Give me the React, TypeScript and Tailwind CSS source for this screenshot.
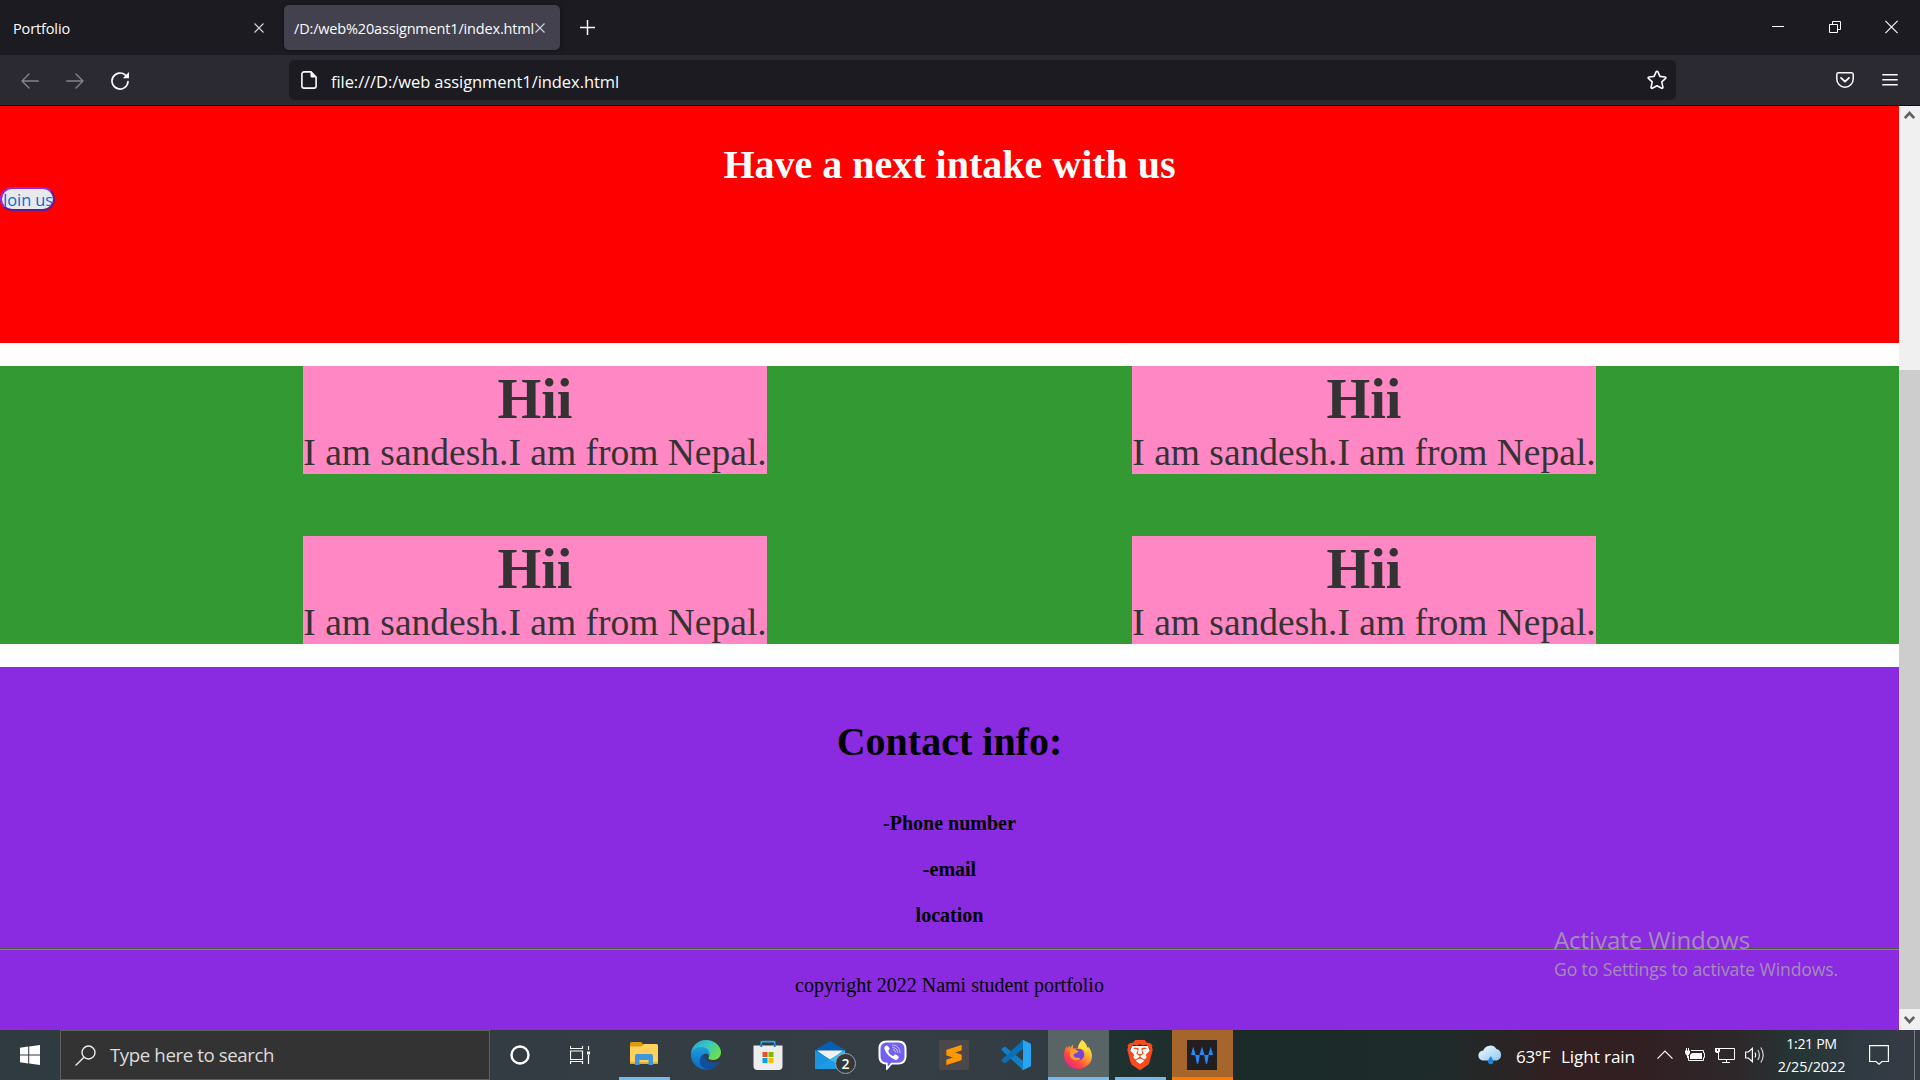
import React from "react";
import { SiBrave, SiSublimetext } from "react-icons/si";

const sans = "font-['Open_Sans','Noto_Sans',sans-serif]";

function TabStrip() {
  return (
    <div className="flex h-[55px] items-start bg-[#1c1b22] text-[#fbfbfe]">
      <div className="flex h-[55px] w-[284px] items-center justify-between pl-[13px] pr-[20px]">
        <span className="mt-[2px] text-[14.5px] leading-5 tracking-[-0.13px]">Portfolio</span>
        <svg width="10" height="10" viewBox="0 0 10 10" stroke="#cfcfd8" strokeWidth="1.2">
          <path d="M.5 .5l9 9M9.5 .5l-9 9" />
        </svg>
      </div>
      <div className="mt-[5px] flex h-[45px] w-[276px] items-center rounded-[5px] bg-[#42414d] pl-[10px] shadow-[0_0_4px_rgba(0,0,0,0.5)]">
        <span className="mt-[2px] w-[241px] whitespace-nowrap text-[14.5px] leading-5 tracking-[-0.17px]">
          /D:/web%20assignment1/index.html
        </span>
        <svg width="10" height="10" viewBox="0 0 10 10" stroke="#cfcfd8" strokeWidth="1.2">
          <path d="M.5 .5l9 9M9.5 .5l-9 9" />
        </svg>
      </div>
      <svg width="15" height="15" viewBox="0 0 15 15" stroke="#fbfbfe" strokeWidth="1.5" className="ml-[20px] mt-[20px]">
        <path d="M7.5 0v15M0 7.500h15" />
      </svg>
      <div className="ml-auto mr-[22px] mt-[20px] flex h-[14px] items-center">
        <svg width="12" height="14" viewBox="0 0 12 14" className="mr-[45px]">
          <path d="M0 6h12v1H0z" fill="#fff" />
        </svg>
        <svg width="12" height="14" viewBox="0 0 12 14" fill="none" stroke="#fff" className="mr-[44px]">
          <path d="M.5 4.5h8v8h-8zM3.500 4V1.500h8v8H9" />
        </svg>
        <svg width="13" height="14" viewBox="0 0 13 14" stroke="#fff" strokeWidth="1.1">
          <path d="M.4 .9l12.200 12.200M12.600 .9L.4 13.100" />
        </svg>
      </div>
    </div>
  );
}

function Toolbar() {
  return (
    <div className="flex h-[51px] items-start border-b border-[#0c0c0d] bg-[#2b2a33] text-[#fbfbfe]">
      <div className="flex h-[50px] w-[289px] items-center pl-[21px]">
        <svg width="18" height="16" viewBox="0 0 18 16" fill="none" stroke="#85848c" strokeWidth="1.4" strokeLinecap="round" strokeLinejoin="round" className="mt-[1px]">
          <path d="M17.300 8H1M8 1L1 8l7 7" />
        </svg>
        <svg width="18" height="16" viewBox="0 0 18 16" fill="none" stroke="#85848c" strokeWidth="1.400" strokeLinecap="round" strokeLinejoin="round" className="ml-[27px] mt-[1px]">
          <path d="M.7 8H17M10 1l7 7-7 7" />
        </svg>
        <svg width="20" height="20" viewBox="0 0 20 20" fill="none" className="ml-[26px] mt-[1px]">
          <path d="M15.500 4.200A8 8 0 1 0 18 10.500" stroke="#fbfbfe" strokeWidth="1.700" strokeLinecap="round" />
          <path d="M19 1v6.200h-6.200z" fill="#fbfbfe" />
        </svg>
      </div>
      <div className="mt-[5px] flex h-10 w-[1387px] items-center rounded-[5px] bg-[#1c1b22] pl-3">
        <svg width="16" height="18" viewBox="0 0 16 18" fill="none" className="mb-[1px]">
          <path d="M3 .9h7l5.100 5.100v9a2.100 2.100 0 0 1-2.100 2.100H3A2.100 2.100 0 0 1 .9 15V3A2.100 2.100 0 0 1 3 .9z" stroke="#fbfbfe" strokeWidth="1.600" />
          <path d="M9.500 .9l5.600 5.600h-4a1.600 1.600 0 0 1-1.600-1.600z" fill="#fbfbfe" />
        </svg>
        <span className="ml-[14px] mt-[3px] text-[16.5px] leading-5 tracking-[-0.07px]">file:///D:/web assignment1/index.html</span>
        <svg width="20" height="20" viewBox="0 0 20 20" fill="none" stroke="#fbfbfe" strokeWidth="1.600" strokeLinejoin="round" className="ml-auto mr-[9px]">
          <path d="M9.200 1.700a.9.9 0 0 1 1.600 0l2.100 4.700 5.200.6a.8.8 0 0 1 .5 1.400l-3.800 3.500 1.100 5.400a.8.8 0 0 1-1.200.9L10 15.700l-4.700 2.500a.8.800 0 0 1-1.200-.9l1.100-5.400L1.400 8.400A.8.8 0 0 1 1.900 7l5.200-.6z" />
        </svg>
      </div>
      <div className="ml-auto mr-[22px] flex h-[50px] items-center">
        <svg width="18" height="16" viewBox="0 0 18 16" fill="none" stroke="#fbfbfe" strokeWidth="1.500" strokeLinecap="round" strokeLinejoin="round">
          <path d="M2.500 .8h13a1.700 1.700 0 0 1 1.700 1.700V7a8.200 8.200 0 0 1-16.400 0V2.500A1.700 1.700 0 0 1 2.500 .8z" />
          <path d="M5 5.800l4 3.800 4-3.800" strokeWidth="1.800" />
        </svg>
        <svg width="16" height="14" viewBox="0 0 16 14" stroke="#fbfbfe" strokeWidth="1.400" className="ml-[28px]">
          <path d="M.3 1.700h15.400M.3 6.700h15.400M.3 11.700h15.400" />
        </svg>
      </div>
    </div>
  );
}

function Card() {
  return (
    <div className="h-[108px] w-[464px] bg-[#ff87c3] text-center text-[#333333]">
      <h2 className="h-[65px] text-[56.25px] font-bold leading-[67px]">Hii</h2>
      <p className="whitespace-nowrap text-[37.5px] leading-[43px]">I am sandesh.I am from Nepal.</p>
    </div>
  );
}

function Page() {
  return (
    <div className="w-[1899px] bg-white font-['Liberation_Serif',serif] text-black">
      <section className="h-[237px] bg-[#ff0000] pt-[35px]">
        <h1 className="h-[46px] text-center text-[40px] font-bold leading-[47px] text-white">Have a next intake with us</h1>
        <button className={`${sans} flex h-6 w-[55px] items-center justify-center overflow-hidden rounded-[12px] border-2 border-b-[#5c1d98] border-l-[#8a2be2] border-r-[#5c1d98] border-t-[#8a2be2] bg-[#e9e9ed] text-[16.4px] leading-5 tracking-[-0.08px] text-[#0b6ad0]`}>
          <span className="ml-[1px] mt-[1px] whitespace-nowrap">Join us</span>
        </button>
      </section>
      <section className="mt-[23px] grid h-[278px] grid-cols-[464px_464px] content-between justify-start gap-x-[365px] bg-[#339933] pl-[303px]">
        <Card />
        <Card />
        <Card />
        <Card />
      </section>
      <footer className="mt-[23px] h-[363px] bg-[#8a2be2] pt-[51px] text-center text-[20px] leading-[23px]">
        <h1 className="h-[46px] text-[40px] font-bold leading-[47px]">Contact info:</h1>
        <p className="mt-[48px] font-bold">-Phone number</p>
        <p className="mt-[23px] font-bold">-email</p>
        <p className="mt-[23px] font-bold">location</p>
        <div className="mt-[21px] h-[2px] border-t border-[#525a3c] bg-[#808a78]" />
        <p className="mt-[24px]">copyright 2022 Nami student portfolio</p>
      </footer>
    </div>
  );
}

function Scrollbar() {
  return (
    <div className="flex w-[21px] flex-col bg-[#f0f0f0]">
      <div className="flex h-[21px] justify-center pt-[4px]">
        <svg width="11" height="10" viewBox="0 0 11 10" fill="none" stroke="#606060" strokeWidth="2.600">
          <path d="M.8 8L5.500 3l4.700 5" />
        </svg>
      </div>
      <div className="mt-[243px] flex-1 bg-[#cdcdcd]" />
      <div className="flex h-[21px] justify-center pt-[6px]">
        <svg width="11" height="10" viewBox="0 0 11 10" fill="none" stroke="#606060" strokeWidth="2.600">
          <path d="M.8 2l4.700 5 4.700-5" />
        </svg>
      </div>
    </div>
  );
}

function ExplorerIcon() {
  return (
    <svg width="28" height="24" viewBox="0 0 28 24" className="-mt-[2px]">
      <path d="M0 1.500Q0 0 1.500 0H11l2.500 2.500V8H0z" fill="#dd9a0c" />
      <path d="M0 4.500h11.500L14 2h12.500Q28 2 28 3.500v17Q28 22 26.500 22h-25Q0 22 0 20.500z" fill="#ffd15c" />
      <path d="M0 20h28v.5q0 1.500-1.500 1.500h-25Q0 22 0 20.500z" fill="#e7ac32" />
      <path d="M5 23V14q0-2 2-2h14q2 0 2 2v9h-4.500v-5h-9v5z" fill="#3f97d9" />
    </svg>
  );
}

function EdgeIcon() {
  return (
    <svg width="30" height="30" viewBox="0 0 30 30">
      <defs>
        <linearGradient id="edgeTop" x1="0" y1="0" x2="1" y2=".6">
          <stop offset="0" stopColor="#2a9fd6" />
          <stop offset=".5" stopColor="#36c7c4" />
          <stop offset="1" stopColor="#6be04a" />
        </linearGradient>
        <linearGradient id="edgeLeft" x1="0" y1="0" x2="0" y2="1">
          <stop offset="0" stopColor="#1b9de2" />
          <stop offset="1" stopColor="#0c67b8" />
        </linearGradient>
      </defs>
      <path d="M0 14C.5 6 7 0 15 0c8.500 0 15 6 15 12.500 0 4.500-3.500 7.500-8 7.500-3.500 0-5-1.300-4.500-2.300C20 14 17 8.500 11 8.500 5 8.500 1 11 0 14z" fill="url(#edgeTop)" />
      <path d="M0 15c0-5 5-8 10.500-8 5.500 0 9.500 4 7.500 9.500-.7-2.800-3-3.800-5-2.500C8 17 9 26 19 29.500 8.500 31.500 0 24 0 15z" fill="url(#edgeLeft)" />
      <path d="M12.700 14.300C8.500 16 7 23 11.500 27c4.500 4 12 3.300 16.200-4.500.3-.7-.3-1-1-.6-5 2.600-12.500.4-14-7.600z" fill="#0f4f9e" />
    </svg>
  );
}

function StoreIcon() {
  return (
    <svg width="30" height="30" viewBox="0 0 30 30">
      <path d="M8.300 6V2.200Q8.300 1.600 9 1.600h12q.7 0 .7.6V6" fill="none" stroke="#25a9e8" strokeWidth="1.700" />
      <path d="M.5 5.500h29V26q0 4-4 4h-21q-4 0-4-4z" fill="#ededed" />
      <path d="M8.300 4v3M21.700 4v3" stroke="#1178c0" strokeWidth="1.700" />
      <path d="M9.500 12h5v5h-5z" fill="#f25022" />
      <path d="M15.500 12h5v5h-5z" fill="#7fba00" />
      <path d="M9.500 18h5v5h-5z" fill="#00a4ef" />
      <path d="M15.500 18h5v5h-5z" fill="#ffb900" />
    </svg>
  );
}

function MailIcon() {
  return (
    <div className="relative h-[28px] w-[30px]">
      <svg width="30" height="28" viewBox="0 0 30 28">
        <path d="M0 9L15 0l15 9v5H0z" fill="#0560b4" />
        <path d="M2 9.500h26L15.500 20z" fill="#f1f1f1" />
        <path d="M0 9l17 10.500L30 28H0z" fill="#1b93e0" />
        <path d="M30 9v19L14.500 18.500z" fill="#35bdf2" />
        <path d="M0 28l14.500-9.500L30 28z" fill="#1f9ae4" />
      </svg>
      <span className="absolute left-[20px] top-[12px] flex h-[21px] w-[21px] items-center justify-center rounded-full border border-[#a0a4a6] bg-[#33383b] text-[14px] font-semibold leading-none text-white">
        2
      </span>
    </div>
  );
}

function ViberIcon() {
  return (
    <svg width="29" height="30" viewBox="0 0 29 30">
      <path d="M9 .5h11c6 0 8.500 3 8.500 8.500v7c0 5.500-2.500 8.500-8.500 8.500h-6L9 30H8v-5.500C3 24 .5 21.500.5 16V9C.5 3.500 3 .5 9 .5z" fill="#fff" />
      <path d="M9.500 2.500h10c4.700 0 7 2 7 7v6.300c0 5-2.300 7-7 7h-6.300l-3.500 4v-4C5 22.600 2.500 20.500 2.500 15.800V9.500c0-5 2.300-7 7-7z" fill="#7360f2" />
      <path d="M8.500 5.500c1-.5 3.500 2.800 3 3.700-.4.800-1.500 1-1.200 2 .7 2.300 2.400 4 4.600 4.700 1 .3 1.300-1 2.300-1.300 1-.2 4 2 3.500 3.200-.7 1.500-2.200 2.600-3.600 2C12 17.500 8 13.500 6.400 8.800c-.4-1.400.7-2.700 2.100-3.300z" fill="#fff" />
      <path d="M14.500 5c4.500.2 7.500 3 7.500 7.500M14.800 7.500c3 .2 4.700 1.800 4.800 4.800M15.300 9.800c1.200.1 1.900.8 2 2" fill="none" stroke="#cfc8ff" strokeWidth="1" strokeLinecap="round" />
    </svg>
  );
}

function VsCodeIcon() {
  return (
    <svg width="30" height="30" viewBox="0 0 30 30">
      <path d="M1 8.500l2-1.600q.8-.5 1.600 0L24 22.500 22 30 .900 10.500q-.8-1 .1-2z" fill="#0f7fc9" />
      <path d="M1 21.500l2 1.600q.8.5 1.600 0L24 7.500 22 0 .9 19.500q-.8 1 .1 2z" fill="#0a6fb5" />
      <path d="M22 0l7 3.200q1 .6 1 1.600v20.400q0 1-1 1.600L22 30q-.8 0-1-.6.900.3 1-1V1.600q-.1-1.300-1-1 .2-.6 1-.6z" fill="#27a5f2" />
    </svg>
  );
}

function FirefoxIcon() {
  return (
    <svg width="28" height="30" viewBox="0 0 28 30">
      <defs>
        <linearGradient id="fxBody" x1=".85" y1=".1" x2=".2" y2=".95">
          <stop offset="0" stopColor="#fff04a" />
          <stop offset=".4" stopColor="#ffa02e" />
          <stop offset=".7" stopColor="#ff4a3e" />
          <stop offset="1" stopColor="#e6248c" />
        </linearGradient>
      </defs>
      <path d="M18 0c3.500 2.500 4.600 4.500 5 6.500l1.200 1.700L24 6.500c2.500 2.500 4 6 4 9.500 0 7.500-6.300 13-14 13S0 23 0 15.500c0-4 1.200-7.300 3-9.500l.3 2.300L5.500 5.500 6 8l3-3.500v4h5c0-4 2-6 4-8.500z" fill="url(#fxBody)" />
      <circle cx="14.300" cy="14.500" r="6" fill="#7446d8" />
      <path d="M6 10c3-1.500 6-.8 8.500 1.500-1 2-3.500 1.500-4.500 2.500-1 1.500.5 4 3 3.800 1.800-.1 3 .5 3.300 1.200-4 3.200-9.800.5-10.300-4z" fill="#ff9a2e" />
      <path d="M14 8.500c.5-3.500 2.200-5.700 4-8.500 3.500 4 5.500 7.500 5.500 12.500-1.500-3-5-4.500-9.500-4z" fill="#ffdf3c" />
    </svg>
  );
}

function BraveIcon() {
  return (
    <div className="relative h-[30px] w-[30px]">
      <svg width="30" height="30" viewBox="0 0 30 30">
        <path d="M7 6h16l2 5-2 9-8 6-8-6-2-9z" fill="#fff" />
      </svg>
      <SiBrave size={30} color="#fb4a1c" className="absolute left-0 top-0" />
    </div>
  );
}

function TaskButton({ children, bg = "", line = "" }: { children: React.ReactNode; bg?: string; line?: string }) {
  return (
    <div className={`flex h-[50px] w-[61px] flex-col items-center ${bg}`}>
      <div className="flex h-[47px] items-center pr-[1px] pt-[3px]">{children}</div>
      <div className={`h-[3px] ${line}`} />
    </div>
  );
}

function Taskbar() {
  return (
    <div className={`${sans} flex h-[50px] items-center bg-[linear-gradient(90deg,#303a41_0px,#353e44_900px,#333c42_1040px,#1f3130_1115px,#1a2b2a_1240px,#1e2b2a_1440px,#331f21_1560px,#321f22_1640px,#2d282b_1740px,#263536_1800px,#303a42_1860px,#363b44_1920px)] text-white`}>
      <div className="flex h-[50px] w-[60px] items-center justify-center">
        <svg width="20" height="20" viewBox="0 0 20 20" fill="#fff">
          <path d="M0 2.800L8.200 1.600v7.900H0zM9.200 1.500L20 0v9.500H9.200zM0 10.500h8.200v7.900L0 17.200zM9.200 10.500H20V20L9.200 18.500z" />
        </svg>
      </div>
      <div className="flex h-[50px] w-[430px] items-center border border-[#5f5f5f] bg-[#333333] pl-[14px]">
        <svg width="21" height="21" viewBox="0 0 21 21" fill="none" stroke="#eee" strokeWidth="1.400">
          <circle cx="13.500" cy="7.500" r="6.500" />
          <path d="M9 12.200L.6 20.400" />
        </svg>
        <span className="ml-[14px] whitespace-nowrap text-[18.7px] leading-6 tracking-[-0.42px] text-[#dcdcdc]">Type here to search</span>
      </div>
      <div className="flex w-[60px] justify-center">
        <svg width="20" height="20" viewBox="0 0 20 20" fill="none" stroke="#fff" strokeWidth="2.400">
          <circle cx="10" cy="10" r="8.500" />
        </svg>
      </div>
      <div className="flex w-[64px] pl-[20px]">
        <svg width="20" height="20" viewBox="0 0 20 20" fill="none" stroke="#fff">
          <path d="M.5 1v2.500h12V1M.5 19v-2.500h12V19M.5 6h12v8.500H.5zM18.500 1v4M18.500 10v9" strokeWidth="1.200" />
          <path d="M17 6.500h3v3h-3z" fill="#fff" stroke="none" />
        </svg>
      </div>
      <div className="flex gap-px">
        <TaskButton line="w-[51px] bg-[#76b9ed]"><ExplorerIcon /></TaskButton>
        <TaskButton><EdgeIcon /></TaskButton>
        <TaskButton><StoreIcon /></TaskButton>
        <TaskButton><MailIcon /></TaskButton>
        <TaskButton><ViberIcon /></TaskButton>
        <TaskButton>
          <div className="flex h-[30px] w-[30px] items-center justify-center rounded-[2px] bg-[#4a4848]">
            <SiSublimetext size={20} color="#ff9800" />
          </div>
        </TaskButton>
        <TaskButton><VsCodeIcon /></TaskButton>
        <TaskButton bg="bg-[#586466]" line="w-[61px] bg-[#76b9ed]"><FirefoxIcon /></TaskButton>
        <TaskButton line="w-[51px] bg-[#76b9ed]"><BraveIcon /></TaskButton>
        <TaskButton bg="bg-[#a5652b]" line="w-[61px] bg-[#ff7800]">
          <svg width="30" height="30" viewBox="0 0 30 30">
            <path d="M0 0h30v30H0z" fill="#231f20" />
            <path d="M4 15l2.200-8.500L8.700 15zM12.500 15L15 6.500l2.500 8.500zM21.300 15l2.500-8.500L26 15zM8.200 15h4.600l-1.600 8.800H9.900zM17.200 15h4.600l-1.700 8.800h-1.300z" fill="#1f8bff" />
          </svg>
        </TaskButton>
      </div>
      <div className="ml-auto flex h-[50px] items-center">
        <svg width="25" height="20" viewBox="0 0 25 20">
          <defs>
            <linearGradient id="cloud" x1="0" y1="0" x2="1" y2="1">
              <stop offset="0" stopColor="#f4fbff" />
              <stop offset="1" stopColor="#8fc6f4" />
            </linearGradient>
          </defs>
          <path d="M5.500 15.500a5 5 0 0 1-.3-10A7.500 7.500 0 0 1 18.500 4a6 6 0 0 1 .5 11.500z" fill="url(#cloud)" />
          <path d="M12.700 11c1.700 2.600 2.700 4 2.700 5.600a2.700 2.700 0 0 1-5.400 0c0-1.600 1-3 2.700-5.600z" fill="#1f86e0" />
        </svg>
        <span className="ml-[13px] mt-[3px] w-[45px] whitespace-nowrap text-[17px] leading-6 tracking-[-0.3px]">63°F</span>
        <span className="mt-[3px] w-[96px] whitespace-nowrap text-[17.2px] leading-6 tracking-[-0.13px]">Light rain</span>
        <svg width="16" height="10" viewBox="0 0 16 10" fill="none" stroke="#fff" strokeWidth="1.200">
          <path d="M.5 8.700L8 1.200l7.500 7.500" />
        </svg>
        <svg width="20" height="14" viewBox="0 0 20 14" fill="none" stroke="#fff" className="ml-[12px]">
          <path d="M6 2.500h12.500V5h1v4.500h-1V12.500h-15V8" />
          <path d="M7 5h10v6H5V7z" fill="#fff" stroke="none" />
          <path d="M0 2.500h5v2.800L3.500 7.500h-2L0 5.300zM1 0h1v3H1zM3 0h1v3H3zM2 7h1v3H2z" fill="#fff" stroke="none" />
        </svg>
        <svg width="20" height="17" viewBox="0 0 20 17" fill="none" stroke="#fff" className="ml-[10px]">
          <path d="M5 1.500h14.500v11H3.500V6M11.500 12.500v3M7 15.500h8" />
          <path d="M0 1h5v3.500L3.500 6h-2L0 4.500z" fill="#fff" stroke="none" />
          <path d="M2 2h1v2H2z" fill="#331f21" stroke="none" />
        </svg>
        <svg width="20" height="18" viewBox="0 0 20 18" fill="none" stroke="#fff" strokeWidth="1.200" className="ml-[10px]">
          <path d="M.6 6h2.800l4-3.600v13.200L3.400 12H.6zM10 6.500q1.500 2.500 0 5" />
          <path d="M12.800 4q3.200 5 0 10M15.800 1.500q4.800 7.500 0 15" opacity=".8" />
        </svg>
        <div className="ml-[4px] mr-[1px] flex h-[50px] w-[85px] flex-col items-center pt-[4px]">
          <span className="h-[23px] whitespace-nowrap text-[14.200px] leading-5 tracking-[-0.38px]">1:21 PM</span>
          <span className="whitespace-nowrap text-[14.4px] leading-5 tracking-[-0.05px]">2/25/2022</span>
        </div>
        <svg width="20" height="20" viewBox="0 0 20 20" fill="none" stroke="#fff" strokeWidth="1.200" className="ml-[14px]">
          <path d="M.6 .6h18.800v15.900h-6.400L10 19.200 7 16.500H.6z" />
        </svg>
        <div className="ml-[25px] h-[50px] w-px bg-[#7b8085]" />
        <div className="w-[5px]" />
      </div>
    </div>
  );
}

export default function App() {
  return (
    <div className={`${sans} relative flex h-[1080px] w-[1920px] flex-col overflow-hidden bg-white`}>
      <TabStrip />
      <Toolbar />
      <div className="flex h-[924px]">
        <Page />
        <Scrollbar />
      </div>
      <Taskbar />
      <div className="pointer-events-none absolute left-[1554px] top-[922px] whitespace-nowrap text-[#a58cb8]">
        <div className="h-[35px] text-[24px] leading-9 tracking-[-0.06px]">Activate Windows</div>
        <div className="text-[17.6px] leading-6 tracking-[-0.12px]">Go to Settings to activate Windows.</div>
      </div>
    </div>
  );
}
